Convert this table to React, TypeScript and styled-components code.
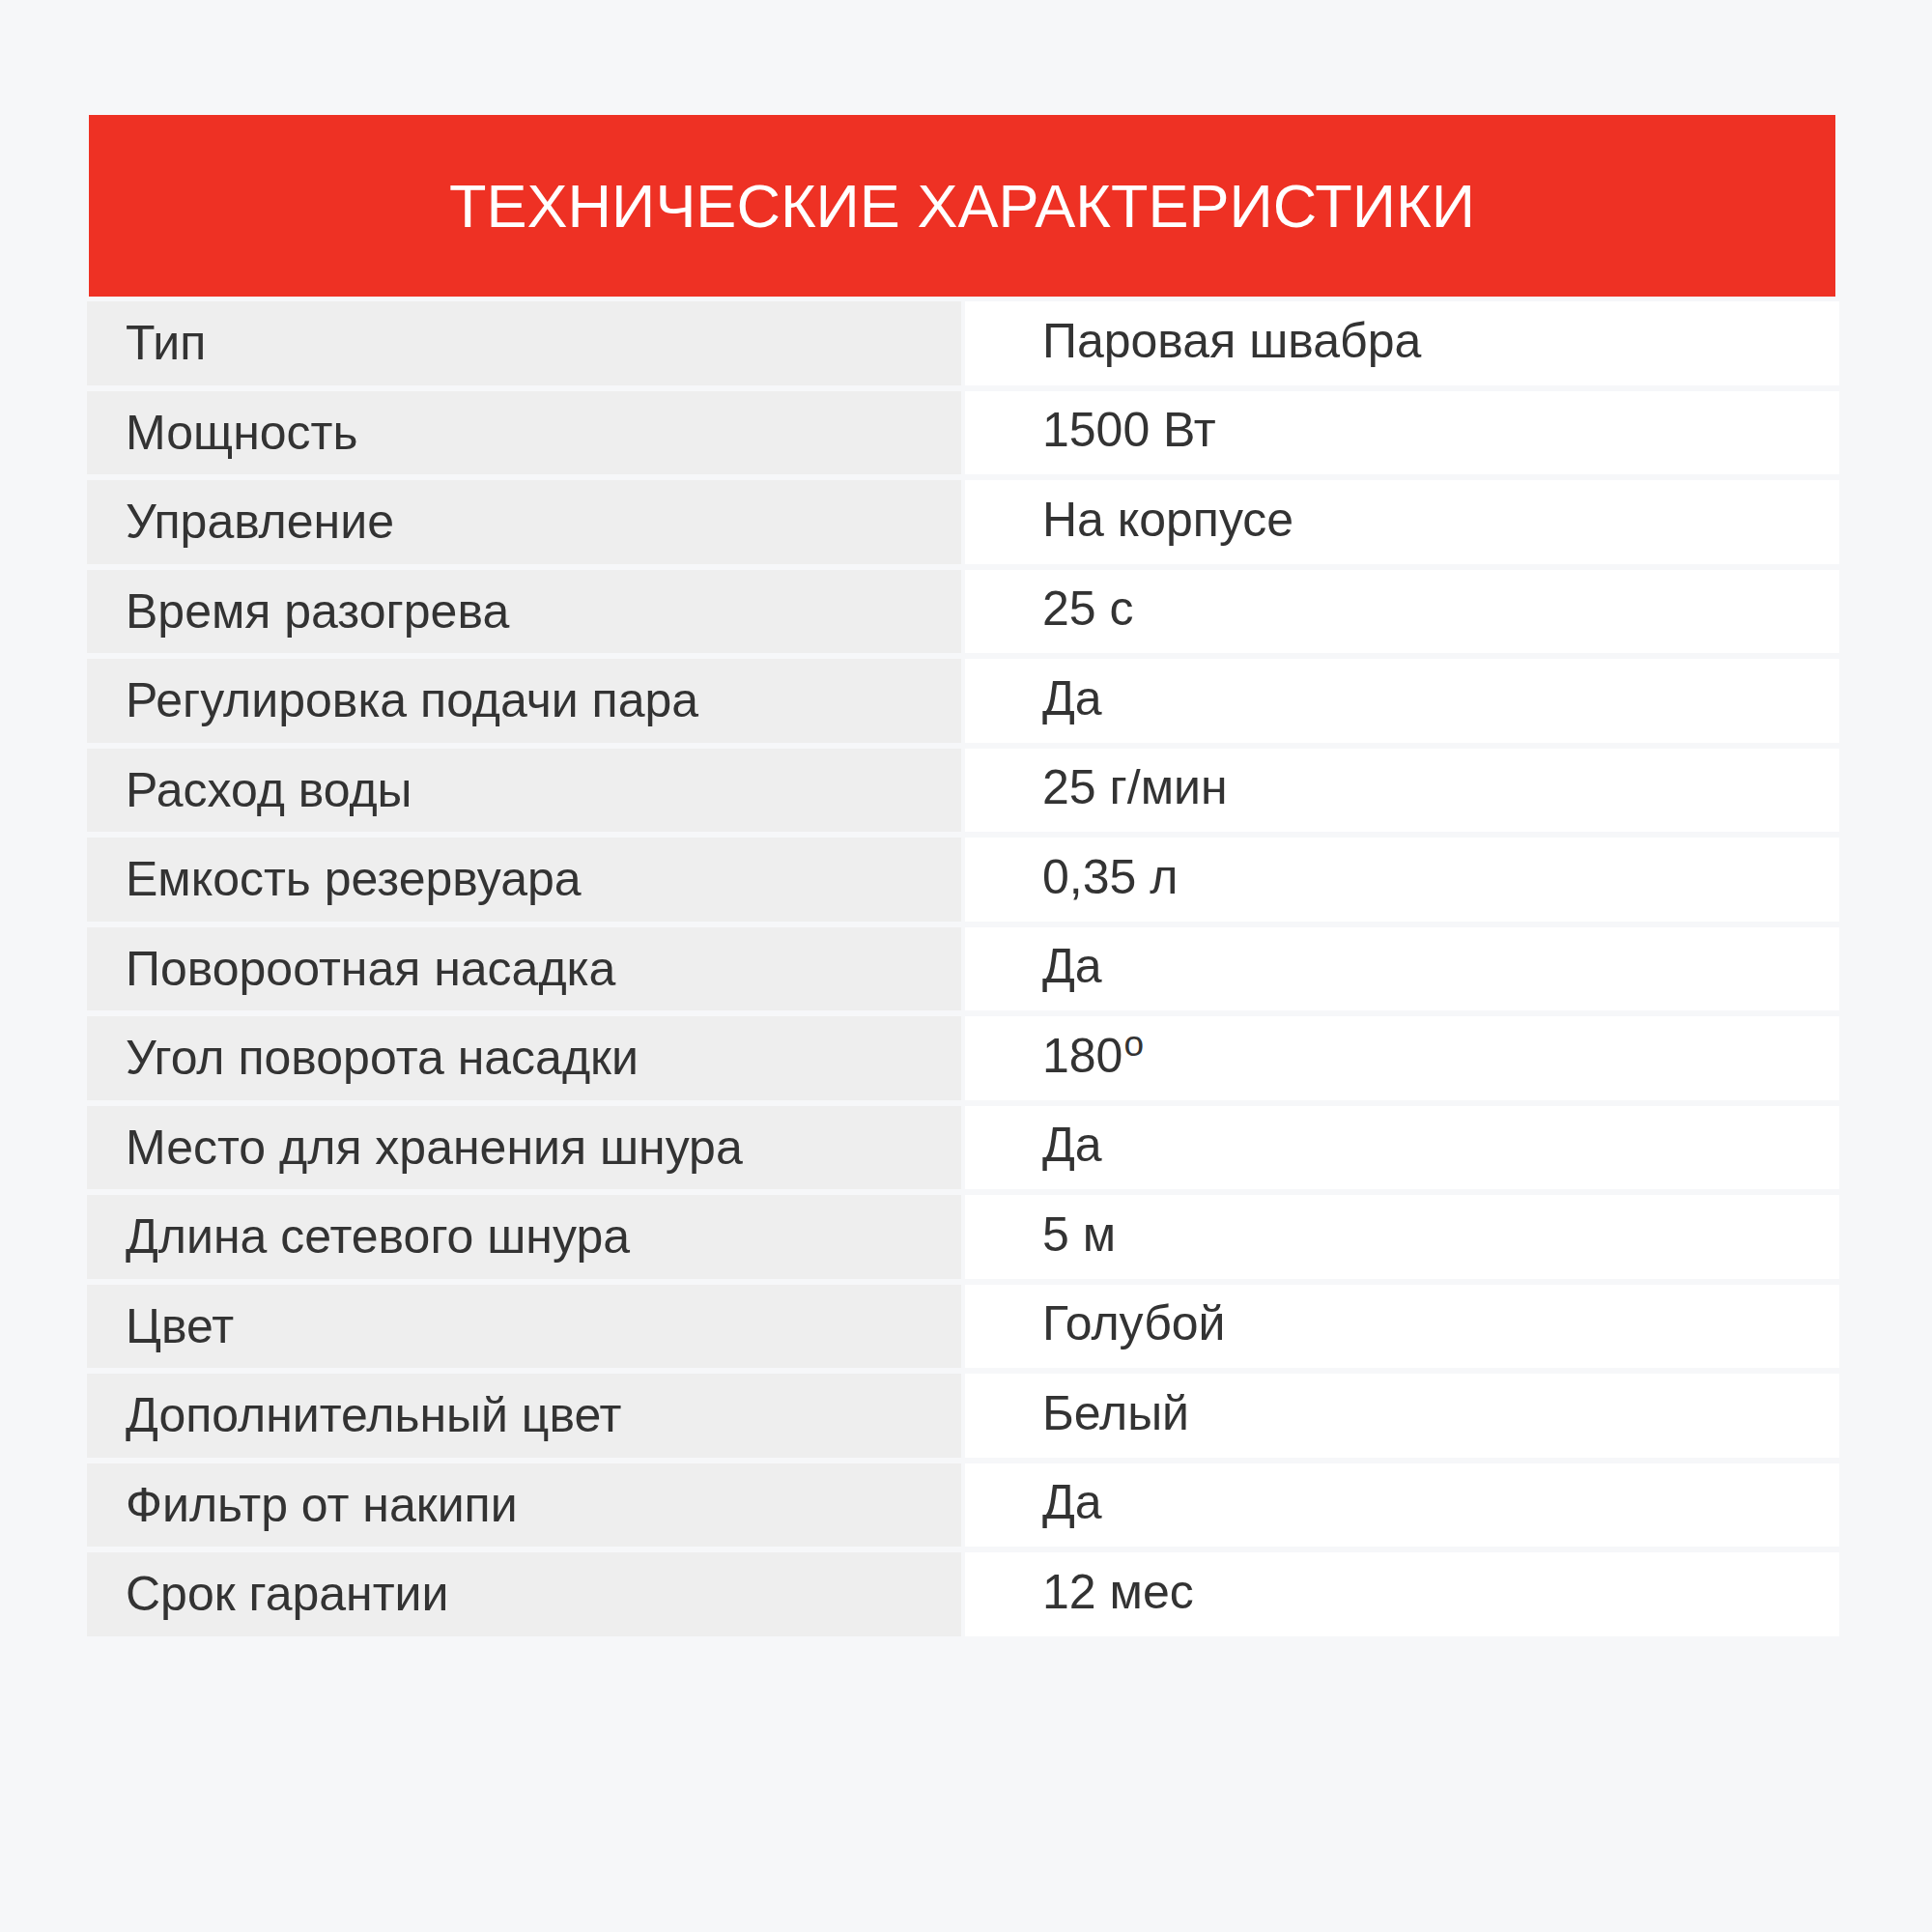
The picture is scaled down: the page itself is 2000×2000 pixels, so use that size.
import React from 'react';
import styled, { createGlobalStyle } from 'styled-components';

const GlobalStyle = createGlobalStyle`
  html, body {
    margin: 0;
    padding: 0;
    background: #f6f7f9;
  }
  body {
    font-family: 'Liberation Sans', Arial, sans-serif;
    color: #333333;
  }
`;

const Page = styled.div`
  width: 2000px;
  height: 2000px;
  padding: 119px 0 0 90px;
  box-sizing: border-box;
`;

const SpecsTable = styled.div`
  width: 1814px;
  display: flex;
  flex-direction: column;
  gap: 6px;
`;

const Header = styled.div`
  margin: 0 4px -1px 2px;
  height: 188px;
  background: #ee3124;
  color: #ffffff;
  display: flex;
  align-items: center;
  justify-content: center;
  font-size: 63px;
`;

const Row = styled.div`
  display: grid;
  grid-template-columns: 905px 905px;
  column-gap: 4px;
  height: 86.5px;
`;

const Cell = styled.div<{ $value?: boolean }>`
  display: flex;
  align-items: center;
  padding-left: ${p => (p.$value ? '80px' : '40px')};
  padding-bottom: ${p => (p.$value ? '5px' : '0')};
  background: ${p => (p.$value ? '#ffffff' : '#eeeeee')};
  font-size: 50px;
  color: #333333;
`;

const Degree = styled.span`
  font-size: 37px;
  line-height: 1;
  align-self: flex-start;
  margin-top: 10px;
  margin-left: 1px;
`;

const specs: [string, React.ReactNode][] = [
  ['Тип', 'Паровая швабра'],
  ['Мощность', '1500 Вт'],
  ['Управление', 'На корпусе'],
  ['Время разогрева', '25 с'],
  ['Регулировка подачи пара', 'Да'],
  ['Расход воды', '25 г/мин'],
  ['Емкость резервуара', '0,35 л'],
  ['Повороотная насадка', 'Да'],
  ['Угол поворота насадки', <>180<Degree>o</Degree></>],
  ['Место для хранения шнура', 'Да'],
  ['Длина сетевого шнура', '5 м'],
  ['Цвет', 'Голубой'],
  ['Дополнительный цвет', 'Белый'],
  ['Фильтр от накипи', 'Да'],
  ['Срок гарантии', '12 мес'],
];

export default function App() {
  return (
    <>
      <GlobalStyle />
      <Page>
        <SpecsTable>
          <Header>ТЕХНИЧЕСКИЕ ХАРАКТЕРИСТИКИ</Header>
          {specs.map(([label, value]) => (
            <Row key={label}>
              <Cell>{label}</Cell>
              <Cell $value>{value}</Cell>
            </Row>
          ))}
        </SpecsTable>
      </Page>
    </>
  );
}
